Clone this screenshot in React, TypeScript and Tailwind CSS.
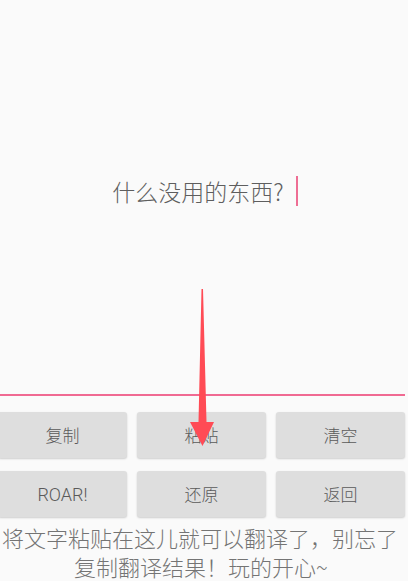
import React from "react";

const cjk = { fontFamily: '"Noto Sans CJK SC", "Noto Sans", sans-serif' };

function Btn({ label, latin }: { label: string; latin?: boolean }) {
  return (
    <div
      className={
        "w-[129px] h-[46px] rounded-[3px] bg-[#dedede] flex items-center justify-center font-light text-[#5a5a5a] shadow-[0_1px_2px_rgba(0,0,0,0.18)] " +
        (latin ? "text-[18px]" : "text-[17px]")
      }
      style={latin ? { fontFamily: 'Roboto, "Noto Sans CJK SC", sans-serif' } : undefined}
    >
      {label}
    </div>
  );
}

export default function App() {
  return (
    <div className="relative w-[408px] h-[581px] overflow-hidden bg-[#fafafa]" style={cjk}>
      <div className="h-[394px] pt-[174px] flex justify-center">
        <div className="flex items-center h-[34px] pl-[2px]">
          <span className="text-[23px] leading-[34px] font-light text-[#5e5e5e]">什么没用的东西?</span>
          <span className="ml-[12px] w-[2px] h-[30px] bg-[#ee6e94]" />
        </div>
      </div>
      <div className="h-[2px] w-[407px] ml-[-2px] bg-[#f06a92]" />
      <div className="ml-[-2px] w-[407px] pt-[16px] flex flex-col gap-[13px]">
        <div className="flex gap-[10px]">
          <Btn label="复制" />
          <Btn label="粘贴" />
          <Btn label="清空" />
        </div>
        <div className="flex gap-[10px]">
          <Btn label="ROAR!" latin />
          <Btn label="还原" />
          <Btn label="返回" />
        </div>
      </div>
      <div className="mt-[6px] flex flex-col items-center text-[22px] leading-[29px] font-light text-[#747474] whitespace-nowrap">
        <div className="ml-[-8px]">将文字粘贴在这儿就可以翻译了，别忘了</div>
        <div className="ml-[-6px]">复制翻译结果！玩的开心~</div>
      </div>
      <svg className="absolute left-0 top-0 pointer-events-none" width="408" height="581" viewBox="0 0 408 581">
        <polygon points="201.5,289 203,289 206.5,422 214,422 202.5,446 190,422 198.5,422" fill="#ff4b55" />
      </svg>
    </div>
  );
}
